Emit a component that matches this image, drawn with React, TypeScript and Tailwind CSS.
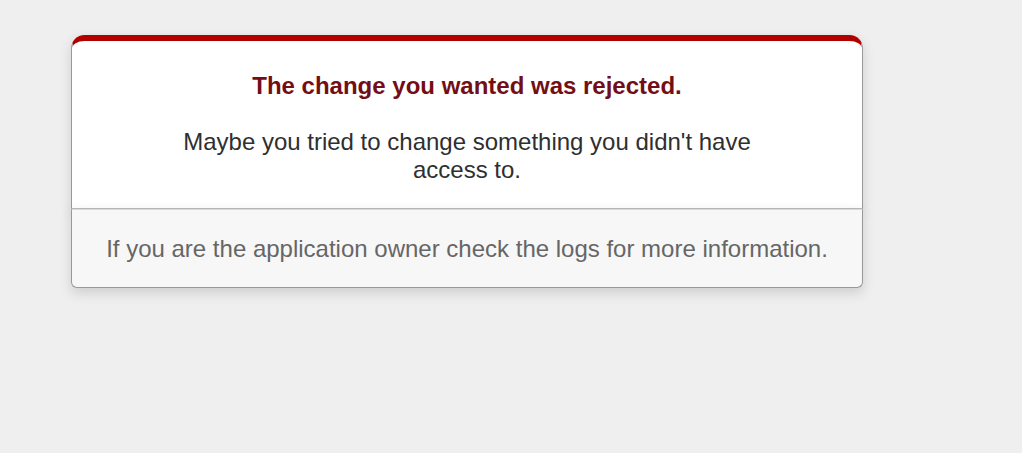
export default function App() {
  return (
    <div
      className="min-h-[453px] bg-[#EFEFEF] text-center text-[24px] leading-[normal] text-[#2E2F30]"
      style={{ fontFamily: '"Liberation Sans", Arial, sans-serif' }}
    >
      <div className="ml-[71px] w-[792px] pt-[35px]">
        <div className="rounded-t-[13.5px] border border-x-[#999] border-t-[6px] border-t-[#B00100] border-b-[#BBB] bg-white px-[12%] pt-[10.5px] shadow-[0_4.5px_12px_rgba(50,50,50,0.17)]">
          <h1 className="my-[16px] text-[24px] font-bold leading-[36px] text-[#730E15]">
            The change you wanted was rejected.
          </h1>
          <p className="mt-[24px] mb-[24px]">
            Maybe you tried to change something you didn't have access to.
          </p>
        </div>
        <p className="m-0 mb-[24px] rounded-b-[6px] border border-[#999] border-t-[#DADADA] bg-[#F7F7F7] px-[24px] pt-[25px] pb-[24px] text-[#666] shadow-[0_4.5px_12px_rgba(50,50,50,0.17)]">
          If you are the application owner check the logs for more information.
        </p>
      </div>
    </div>
  )
}
